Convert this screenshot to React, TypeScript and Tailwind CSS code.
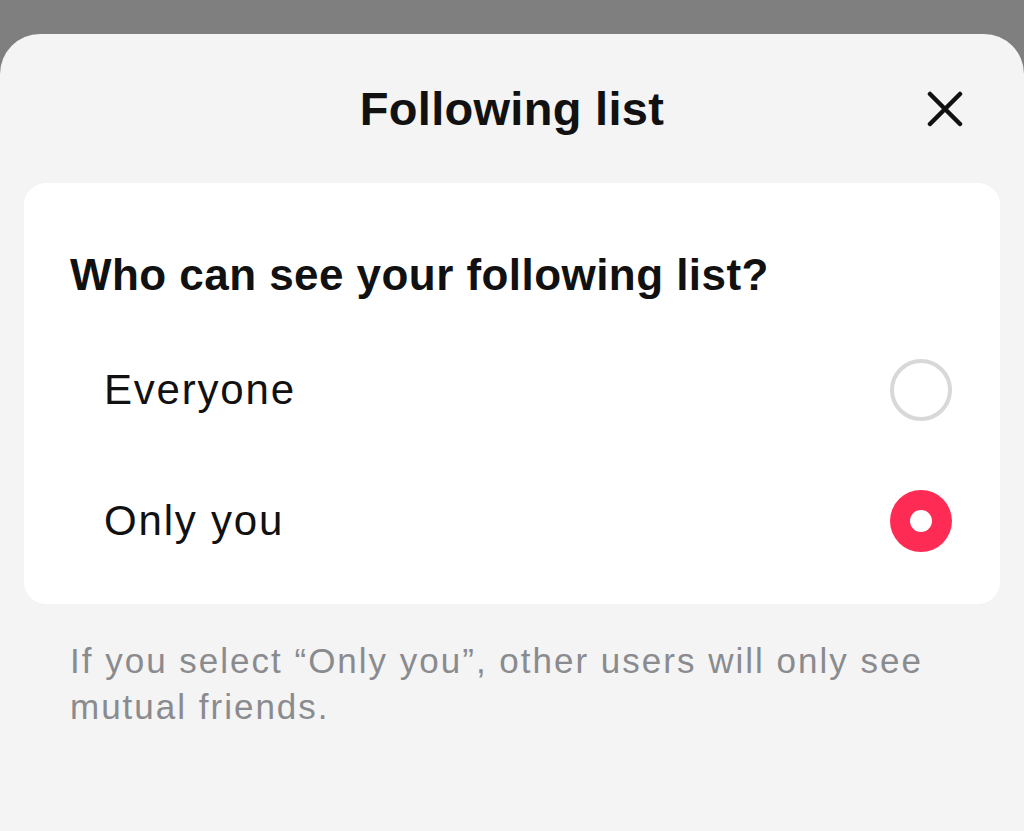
import { useState } from 'react'

const options = ['Everyone', 'Only you']

export default function App() {
  const [selected, setSelected] = useState('Only you')

  return (
    <div className="min-h-[831px] w-[1024px] bg-[#7f7f7f] pt-[34px] font-['Liberation_Sans',Arial,sans-serif]">
      <div className="h-[797px] rounded-t-[40px] bg-[#f4f4f4]">
        <div className="relative flex h-[148px] items-center justify-center pt-[2px]">
          <h1 className="text-[47px] font-bold tracking-[0.3px] text-[#111]">Following list</h1>
          <button className="absolute right-[61px] top-[57px] text-[#111]" aria-label="Close">
            <svg className="h-[36px] w-[36px]" viewBox="0 0 36 36" fill="none" stroke="currentColor" strokeWidth={4.5} strokeLinecap="round">
              <path d="M3 3l30 30M33 3L3 33" />
            </svg>
          </button>
        </div>

        <div className="mx-[24px] mt-[1px] rounded-[22px] bg-white pb-[18px] pl-[46px] pr-[48px] pt-[62px]">
          <h2 className="text-[44px] font-bold leading-[60px] tracking-[0.45px] text-[#111]">Who can see your following list?</h2>
          <div className="mt-[19px] pl-[34px]">
            {options.map((opt) => {
              const isOn = selected === opt
              return (
                <button
                  key={opt}
                  onClick={() => setSelected(opt)}
                  className="flex h-[131px] w-full items-center justify-between text-left"
                >
                  <span className="text-[42px] tracking-[1.8px] text-[#111]">{opt}</span>
                  {isOn ? (
                    <span className="flex h-[62px] w-[62px] items-center justify-center rounded-full bg-[#fe2c55]">
                      <span className="h-[22px] w-[22px] rounded-full bg-white" />
                    </span>
                  ) : (
                    <span className="h-[62px] w-[62px] rounded-full border-[4px] border-[#d8d8d8]" />
                  )}
                </button>
              )
            })}
          </div>
        </div>

        <p className="mt-[34px] px-[70px] text-[35px] leading-[46px] tracking-[2px] text-[#8a8b8f]">
          If you select “Only you”, other users will only see mutual friends.
        </p>
      </div>
    </div>
  )
}
